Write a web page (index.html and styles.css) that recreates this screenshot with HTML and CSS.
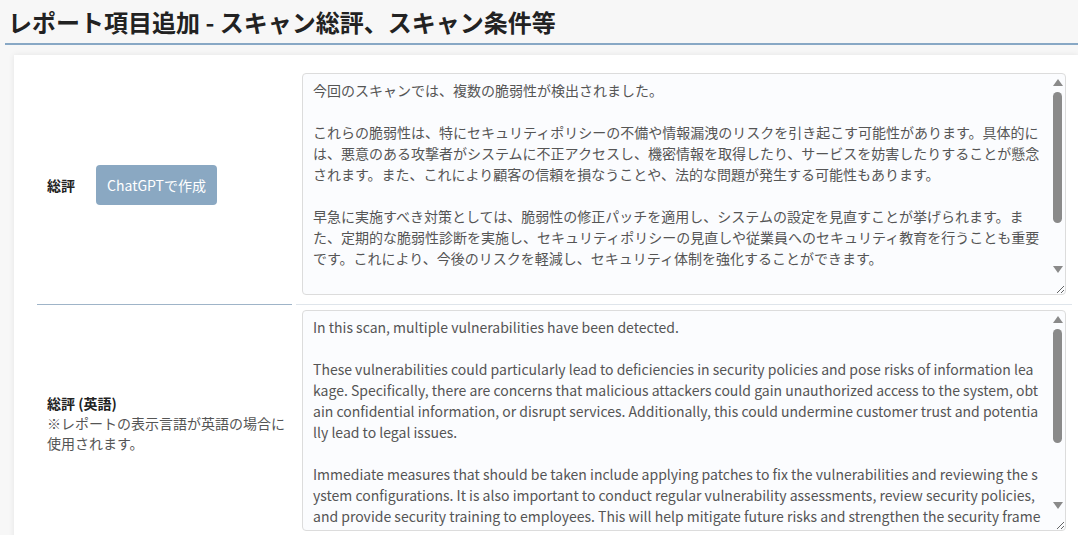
FILE: index.html
```html
<!DOCTYPE html>
<html lang="ja">
<head>
<meta charset="utf-8">
<title>レポート項目追加</title>
<link rel="stylesheet" href="styles.css">
</head>
<body>
<h1 class="page-title">レポート項目追加 - スキャン総評、スキャン条件等</h1>
<div class="card">
  <table class="form-table">
    <tr>
      <th class="label-cell">
        <div class="label-inline">
          <span class="label-text">総評</span>
          <button class="gpt-btn" type="button">ChatGPTで作成</button>
        </div>
      </th>
      <td class="field-cell">
        <div class="field-wrap">
          <textarea class="field" readonly>今回のスキャンでは、複数の脆弱性が検出されました。

これらの脆弱性は、特にセキュリティポリシーの不備や情報漏洩のリスクを引き起こす可能性があります。具体的には、悪意のある攻撃者がシステムに不正アクセスし、機密情報を取得したり、サービスを妨害したりすることが懸念されます。また、これにより顧客の信頼を損なうことや、法的な問題が発生する可能性もあります。

早急に実施すべき対策としては、脆弱性の修正パッチを適用し、システムの設定を見直すことが挙げられます。また、定期的な脆弱性診断を実施し、セキュリティポリシーの見直しや従業員へのセキュリティ教育を行うことも重要です。これにより、今後のリスクを軽減し、セキュリティ体制を強化することができます。

総じて、今回の診断結果を踏まえて早急に対策を講じることで、より安全なシステム運用が可能となります。今後も定期的な診断を継続することを推奨します。</textarea>
          <div class="sb" aria-hidden="true">
            <span class="sb-up"></span>
            <span class="sb-thumb" style="height: 131px"></span>
            <span class="sb-down"></span>
          </div>
        </div>
      </td>
    </tr>
    <tr>
      <th class="label-cell">
        <div class="label-text">総評 (英語)</div>
        <div class="note">※レポートの表示言語が英語の場合に使用されます。</div>
      </th>
      <td class="field-cell">
        <div class="field-wrap">
          <textarea class="field field-en" readonly>In this scan, multiple vulnerabilities have been detected.

These vulnerabilities could particularly lead to deficiencies in security policies and pose risks of information leakage. Specifically, there are concerns that malicious attackers could gain unauthorized access to the system, obtain confidential information, or disrupt services. Additionally, this could undermine customer trust and potentially lead to legal issues.

Immediate measures that should be taken include applying patches to fix the vulnerabilities and reviewing the system configurations. It is also important to conduct regular vulnerability assessments, review security policies, and provide security training to employees. This will help mitigate future risks and strengthen the security framework.

Overall, by promptly taking countermeasures based on the results of this assessment, safer system operation will be possible.</textarea>
          <div class="sb" aria-hidden="true">
            <span class="sb-up"></span>
            <span class="sb-thumb" style="height: 114px"></span>
            <span class="sb-down"></span>
          </div>
        </div>
      </td>
    </tr>
  </table>
</div>
</body>
</html>
```

FILE: styles.css
```css
html, body {
  margin: 0;
  padding: 0;
}
body {
  background: #f7f7f7;
  font-family: "Noto Sans CJK JP", "Noto Sans", sans-serif;
  color: #222;
  overflow: hidden;
}
.page-title {
  margin: 0 0 0 5px;
  padding: 6px 0 5px 3px;
  font-size: 24px;
  line-height: 32px;
  font-weight: 700;
  color: #222;
  border-bottom: 2px solid #88a8c5;
}
.card {
  margin: 10px 0 0 14px;
  background: #fff;
  box-shadow: 0 0 6px rgba(0, 0, 0, 0.08);
  padding: 10px 6px 0 23px;
}
.form-table {
  width: calc(100% + 8px);
  border-collapse: separate;
  border-spacing: 4px 0;
  margin: 0 -4px;
}
.label-cell {
  width: 240px;
  padding: 0 5px 0 10px;
  text-align: left;
  vertical-align: middle;
  border-bottom: 1px solid #9fb4c8;
  font-weight: normal;
}
.field-cell {
  padding: 8px 6px 9px 6px;
  border-bottom: 1px solid #dfe5eb;
}
.form-table tr + tr .field-cell {
  padding-top: 5px;
}
.form-table tr:last-child .label-cell,
.form-table tr:last-child .field-cell {
  border-bottom: none;
}
.label-inline {
  display: flex;
  align-items: center;
  gap: 21px;
}
.label-text {
  font-size: 14px;
  font-weight: 700;
  color: #222;
  line-height: 20px;
}
.note {
  font-size: 14px;
  line-height: 20px;
  color: #555;
}
.gpt-btn {
  font-family: inherit;
  font-size: 14px;
  color: #fff;
  background: #8aa8c2;
  border: none;
  border-radius: 4px;
  width: 121px;
  height: 40px;
  padding: 0;
  cursor: pointer;
}
.field-wrap {
  position: relative;
}
.field {
  display: block;
  box-sizing: border-box;
  width: 100%;
  height: 222px;
  margin: 0;
  padding: 6px 24px 6px 10px;
  border: 1px solid #dcdcdc;
  border-radius: 4px;
  background: #fbfcfe;
  color: #555;
  font-family: "Noto Sans CJK JP", "Noto Sans", sans-serif;
  font-size: 14px;
  line-height: 21px;
  word-break: break-all;
  overflow: hidden;
  resize: vertical;
}
.field-en {
  height: 221px;
}
.sb {
  position: absolute;
  top: 1px;
  right: 1px;
  bottom: 1px;
  width: 15px;
  display: flex;
  flex-direction: column;
  align-items: center;
  pointer-events: none;
}
.sb-up {
  margin-top: 5px;
  width: 0;
  height: 0;
  border-left: 5px solid transparent;
  border-right: 5px solid transparent;
  border-bottom: 7px solid #8a8a8a;
}
.sb-thumb {
  margin-top: 6px;
  width: 9px;
  border-radius: 5px;
  background: #8a8a8a;
}
.sb-down {
  margin-top: auto;
  margin-bottom: 21px;
  width: 0;
  height: 0;
  border-left: 5px solid transparent;
  border-right: 5px solid transparent;
  border-top: 7px solid #8a8a8a;
}
```
